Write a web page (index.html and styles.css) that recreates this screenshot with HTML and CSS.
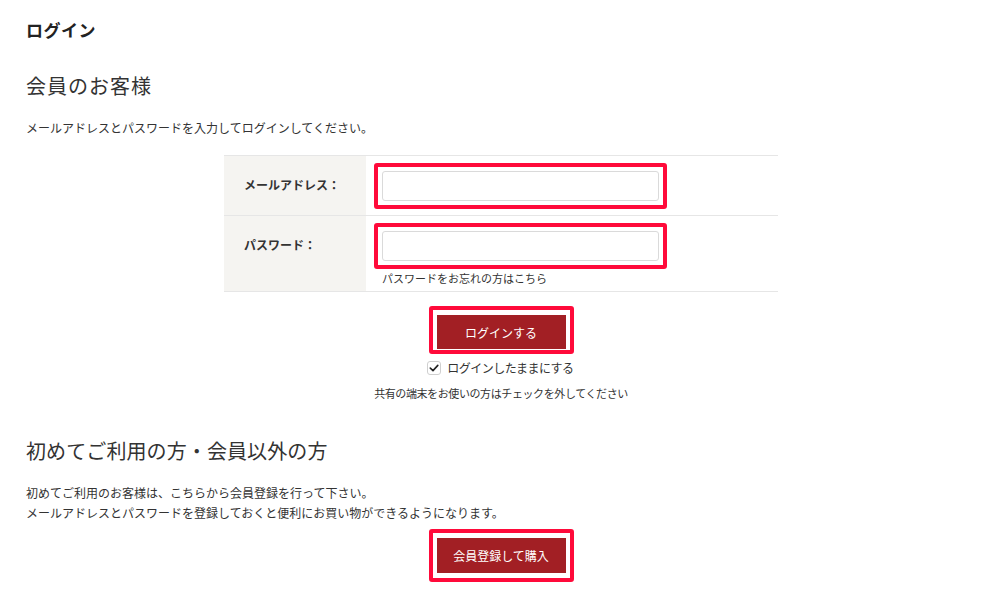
FILE: index.html
```html
<!DOCTYPE html>
<html lang="ja">
<head>
    <meta charset="UTF-8">
    <title>ログイン</title>
    <link rel="stylesheet" href="styles.css">
</head>
<body>
<div class="page">
    <h1 class="pageTitle">ログイン</h1>

    <h2 class="sectionTitle">会員のお客様</h2>
    <p class="lead">メールアドレスとパスワードを入力してログインしてください。</p>

    <table class="loginTable">
        <tr>
            <th>メールアドレス：</th>
            <td>
                <div class="mark"><input type="text" class="field"></div>
            </td>
        </tr>
        <tr>
            <th>パスワード：</th>
            <td class="pwCell">
                <div class="mark"><input type="password" class="field"></div>
                <a class="forgot">パスワードをお忘れの方はこちら</a>
            </td>
        </tr>
    </table>

    <div class="btnArea">
        <div class="mark markBtn markLogin"><button class="redBtn loginBtn">ログインする</button></div>
    </div>
    <div class="keepRow">
        <span class="check">
            <svg width="14" height="14" viewBox="0 0 14 14">
                <rect x="0.5" y="0.5" width="13" height="13" rx="2.5" fill="#fff" stroke="#cfcfcf"/>
                <path d="M3.3 7.1 L6 9.6 L10.8 4.4" fill="none" stroke="#222" stroke-width="1.6" stroke-linecap="round" stroke-linejoin="round"/>
            </svg>
        </span>
        <span class="keepLabel">ログインしたままにする</span>
    </div>
    <p class="note">共有の端末をお使いの方はチェックを外してください</p>

    <h2 class="sectionTitle second">初めてご利用の方・会員以外の方</h2>
    <p class="lead">初めてご利用のお客様は、こちらから会員登録を行って下さい。<br>メールアドレスとパスワードを登録しておくと便利にお買い物ができるようになります。</p>

    <div class="btnArea regArea">
        <div class="mark markBtn"><button class="redBtn regBtn">会員登録して購入</button></div>
    </div>
</div>
</body>
</html>
```

FILE: styles.css
```css
body {
    margin: 0;
    background: #fff;
    color: #333;
    font-family: "Noto Sans CJK JP", "Noto Sans", sans-serif;
}

.page {
    padding: 18px 24px 0 26px;
}

.pageTitle {
    margin: 0;
    font-size: 17px;
    line-height: 24px;
    font-weight: bold;
    letter-spacing: 0.5px;
    color: #222;
}

.sectionTitle {
    margin: 29px 0 0 0;
    font-size: 20px;
    line-height: 30px;
    font-weight: normal;
    letter-spacing: 1px;
    color: #333;
}
.sectionTitle.second {
    margin-top: 34px;
    letter-spacing: 0.1px;
}

.lead {
    margin: 17px 0 0 0;
    font-size: 12px;
    line-height: 20px;
}

.loginTable {
    width: 554px;
    margin: 17px auto 0 auto;
    border-collapse: collapse;
}
.loginTable th,
.loginTable td {
    border-top: 1px solid #e6e6e6;
    border-bottom: 1px solid #e6e6e6;
    vertical-align: top;
}
.loginTable th {
    width: 122px;
    padding: 19px 0 0 20px;
    background: #f5f4f1;
    text-align: left;
    font-size: 12px;
    line-height: 20px;
    font-weight: bold;
    color: #333;
}
.loginTable td {
    padding: 7px 8px 6px 8px;
}
.loginTable .pwCell {
    padding-bottom: 4px;
}

.mark {
    display: inline-block;
    border: 4px solid #ff0a3a;
    border-radius: 3px;
    padding: 4px;
}
.mark .field {
    display: block;
    box-sizing: border-box;
    width: 277px;
    height: 30px;
    margin: 0;
    border: 1px solid #dadada;
    border-radius: 3px;
    background: #fff;
}

.forgot {
    display: block;
    padding-left: 8px;
    font-size: 11px;
    line-height: 18px;
    color: #333;
}

.btnArea {
    margin-top: 14px;
    text-align: center;
}
.regArea {
    margin-top: 6px;
}
.markBtn {
    padding: 5px 4px 5px 4px;
}
.markLogin {
    padding-bottom: 1px;
}
.redBtn {
    display: block;
    width: 129px;
    height: 35px;
    margin: 0;
    border: none;
    background: #a21f24;
    color: #fff;
    font-family: "Noto Sans CJK JP", "Noto Sans", sans-serif;
    font-size: 12px;
}
.loginBtn {
    height: 34px;
}

.keepRow {
    display: flex;
    justify-content: center;
    align-items: center;
    gap: 6px;
    margin-top: 4px;
    height: 20px;
    padding-right: 1px;
}
.check {
    display: block;
    width: 14px;
    height: 14px;
}
.check svg {
    display: block;
}
.keepLabel {
    font-size: 12px;
    line-height: 20px;
    letter-spacing: -0.5px;
}

.note {
    margin: 6px 0 0 0;
    text-align: center;
    font-size: 11px;
    line-height: 18px;
    letter-spacing: -0.4px;
}
```
